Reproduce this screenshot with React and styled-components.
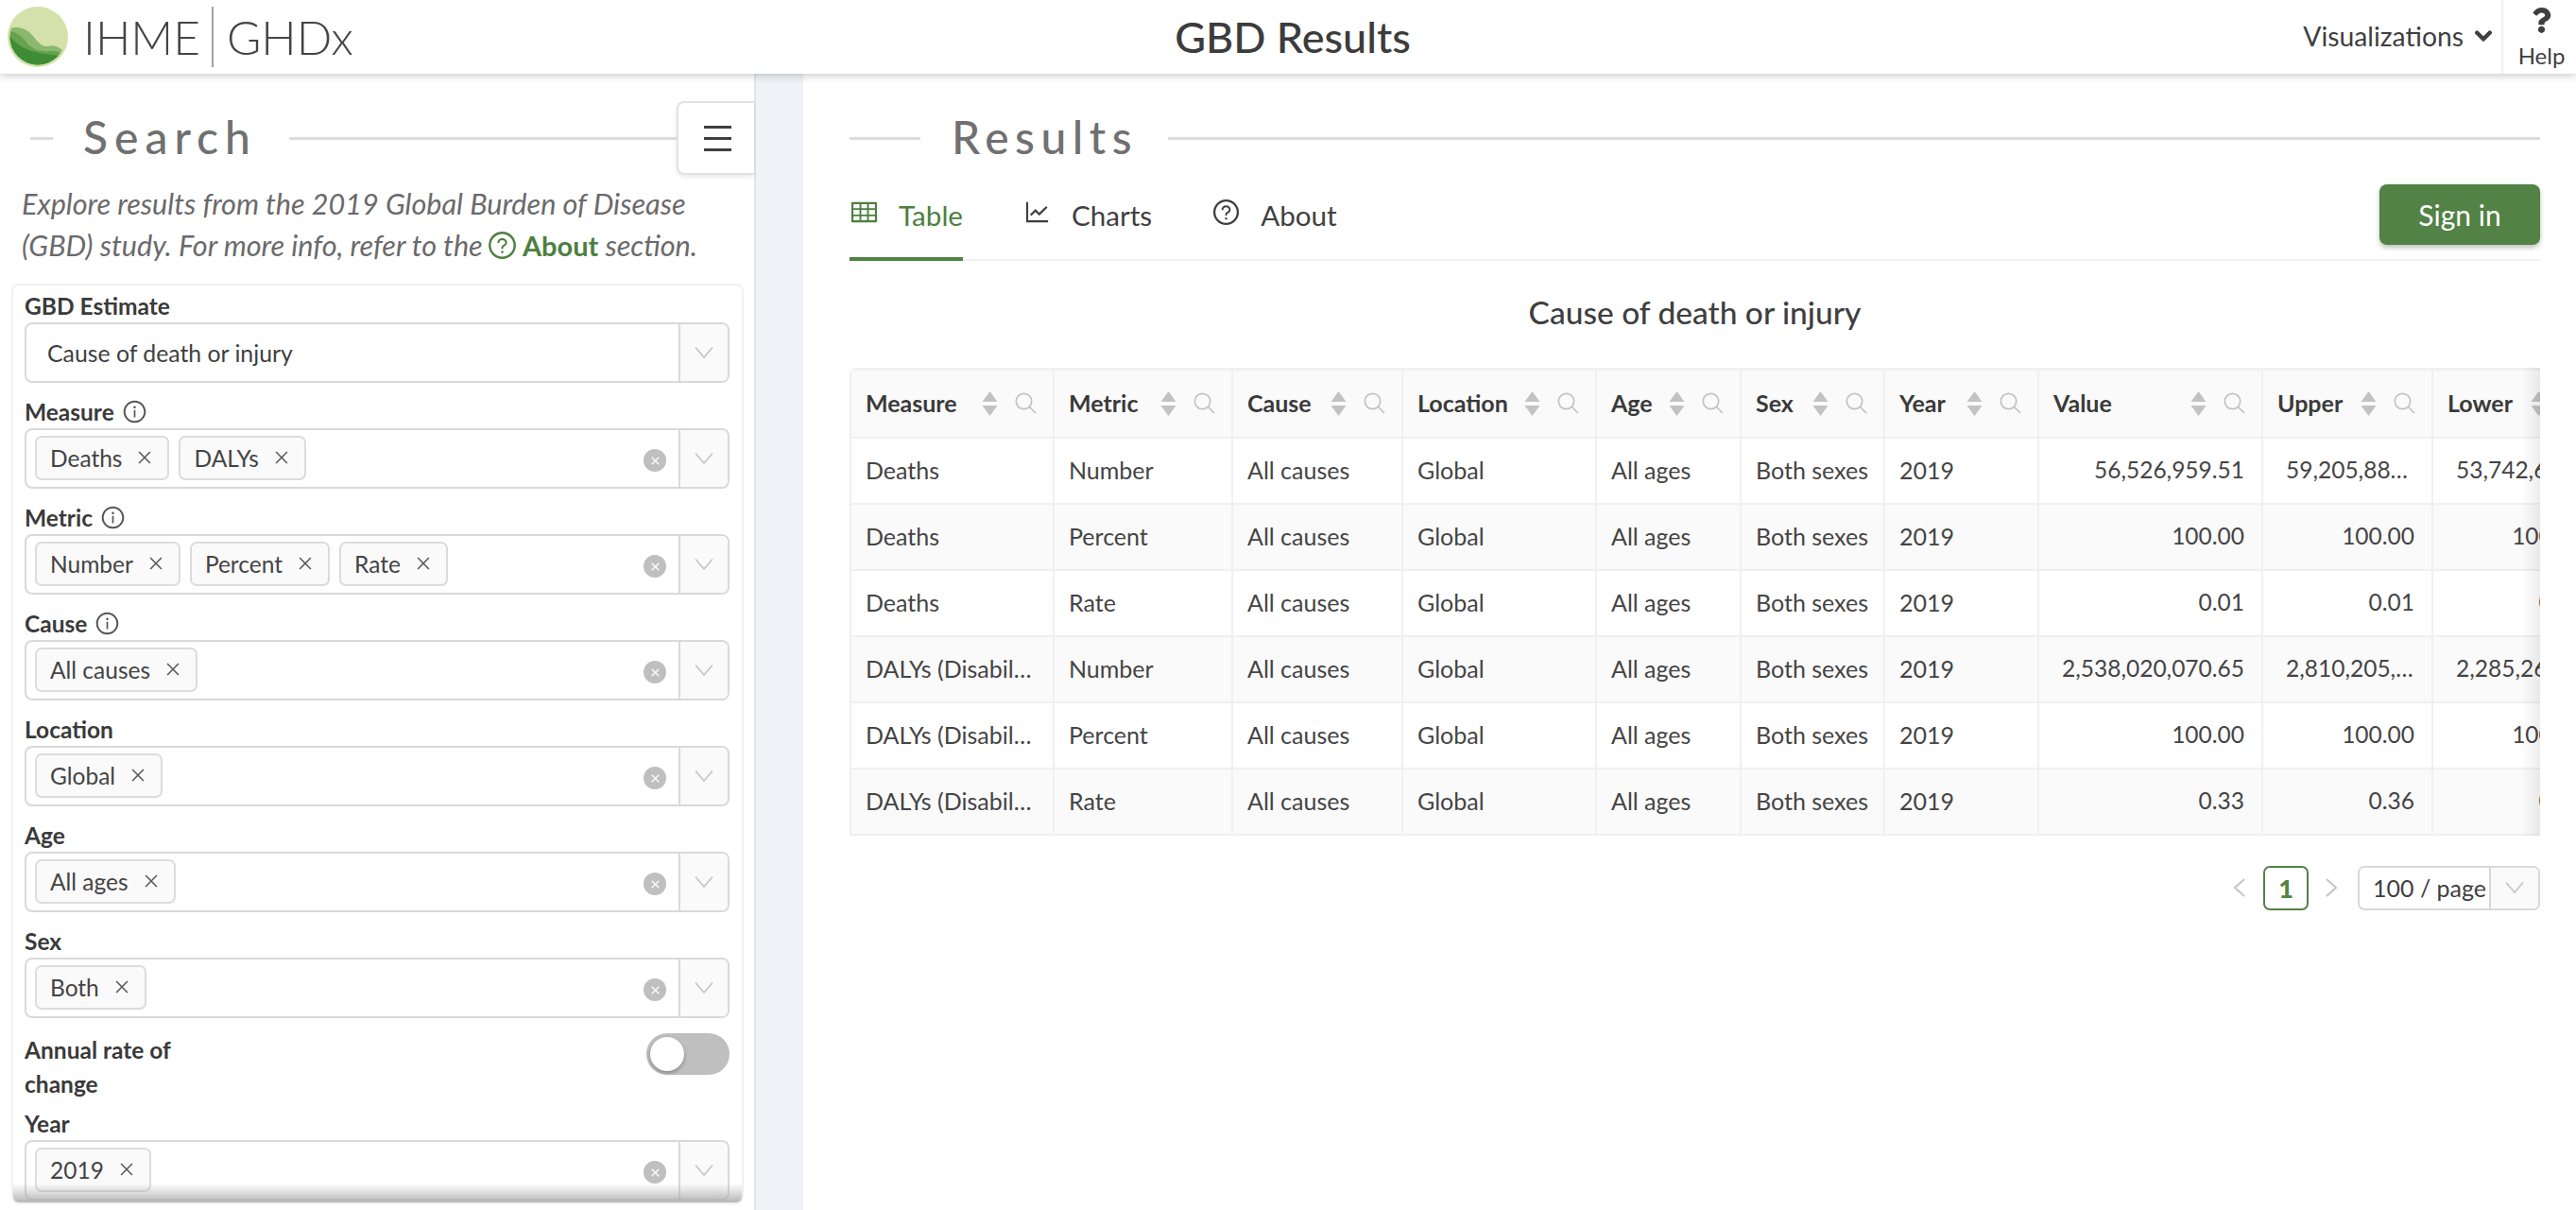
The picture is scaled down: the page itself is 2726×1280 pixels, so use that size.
import React from "react";
import styled, { createGlobalStyle } from "styled-components";
import {
  AiOutlineTable,
  AiOutlineLineChart,
  AiOutlineQuestionCircle,
  AiOutlineInfoCircle,
} from "react-icons/ai";
import { FaQuestion, FaChevronDown } from "react-icons/fa";

const GlobalStyle = createGlobalStyle`
  html, body {
    margin: 0;
    height: 100%;
    overflow: hidden;
    background: #fff;
    font-family: Lato, "Open Sans", sans-serif;
    color: #3f3f3f;
  }
  * { box-sizing: border-box; }
`;

const Page = styled.div`
  width: 2726px;
  height: 1280px;
  display: flex;
  flex-direction: column;
  overflow: hidden;
`;

const Header = styled.header`
  height: 78px;
  flex: none;
  display: grid;
  grid-template-columns: 1fr auto 1fr;
  align-items: center;
  background: #fff;
  box-shadow: 0 2px 8px rgba(0, 0, 0, 0.22);
  position: relative;
  z-index: 2;
`;

const LogoWrap = styled.div`
  display: flex;
  align-items: center;
  padding-left: 8px;
  color: #454545;
  font-weight: 300;
  font-size: 49.5px;
  letter-spacing: 0;
`;

const LogoMark = styled.svg`
  width: 64px;
  height: 64px;
  margin-right: 16px;
  flex: none;
`;

const LogoDivider = styled.span`
  width: 2px;
  height: 64px;
  margin: 0 14px 0 12px;
  background: #a3a3a3;
`;

const PageTitle = styled.h1`
  margin: 0;
  padding-left: 10px;
  font-size: 45px;
  font-weight: 500;
  color: #3c3c3c;
`;

const HeaderRight = styled.div`
  display: flex;
  justify-content: flex-end;
  align-items: stretch;
  height: 78px;
`;

const VizMenu = styled.div`
  display: flex;
  align-items: center;
  gap: 11px;
  padding: 0 9px 2px 0;
  font-size: 28.3px;
  svg { font-size: 20px; stroke: currentColor; stroke-width: 30px; }
`;

const HelpBox = styled.div`
  width: 79px;
  border-left: 2px solid #f0f0f0;
  display: flex;
  flex-direction: column;
  align-items: center;
  padding: 8px 0 0 4px;
  font-size: 24px;
  line-height: 30px;
  svg { font-size: 27px; color: #3f3f3f; margin-bottom: 9px; }
`;

const Body = styled.div`
  flex: 1;
  display: flex;
  min-height: 0;
`;

const Sidebar = styled.aside`
  width: 800px;
  flex: none;
  padding-top: 28px;
  border-right: 2px solid #e2e4ea;
`;

const Gutter = styled.div`
  width: 50px;
  flex: none;
  background: #f0f2f7;
`;

const Main = styled.main`
  flex: 1;
  min-width: 0;
  padding: 28px 38px 0 49px;
`;

const TitleRow = styled.div`
  height: 78px;
  display: flex;
  align-items: center;
  padding-left: ${(p) => p.$inset || 0}px;
`;

const Rule = styled.span`
  height: 3px;
  margin-top: 3px;
  background: #dcdcdc;
  flex: ${(p) => (p.$width ? `0 0 ${p.$width}px` : 1)};
`;

const SectionTitle = styled.h2`
  margin: 0 ${(p) => p.$gapRight}px 0 ${(p) => p.$gapLeft}px;
  font-size: 48px;
  font-weight: 500;
  letter-spacing: ${(p) => p.$track}px;
  color: #707070;
  line-height: 60px;
`;

const MenuButton = styled.button`
  width: 82px;
  height: 78px;
  flex: none;
  margin-top: 2px;
  background: #fff;
  border: 2px solid #e2e2e2;
  border-right: none;
  border-radius: 8px 0 0 8px;
  box-shadow: 0 2px 4px rgba(0, 0, 0, 0.1);
  display: flex;
  flex-direction: column;
  align-items: center;
  justify-content: center;
  gap: 9px;
  padding: 0 0 0 2px;
  span { width: 29px; height: 3px; background: #3f3f3f; }
`;

const Intro = styled.p`
  margin: 10px 0 18px;
  padding: 0 23px;
  font-size: 30.6px;
  line-height: 44px;
  font-style: italic;
  color: #6a6a6a;
  white-space: nowrap;
`;

const AboutLink = styled.span`
  color: #4c8040;
  font-style: normal;
  font-weight: 700;
  font-size: 29px;
  svg { font-size: 33px; vertical-align: -5px; margin: 0 5px 0 -3px; }
`;

const Panel = styled.div`
  position: relative;
  width: 775px;
  height: 974px;
  margin-left: 12px;
  padding: 3px 13px 0 12px;
  border: 2px solid #f1f1f1;
  border-radius: 8px;
  overflow: hidden;
  &::after {
    content: "";
    position: absolute;
    left: 0;
    right: 0;
    bottom: 0;
    height: 20px;
    background: linear-gradient(rgba(170, 170, 170, 0), rgba(170, 170, 170, 0.85));
  }
`;

const Field = styled.div`
  margin-bottom: 12px;
`;

const Label = styled.label`
  display: flex;
  align-items: center;
  gap: 8px;
  height: 36px;
  font-size: 24.5px;
  font-weight: 700;
  color: #3a3a3a;
  svg { font-size: 27px; font-weight: 400; color: #555; }
`;

const SelectBox = styled.div`
  height: 64px;
  display: flex;
  background: #fff;
  border: 2px solid #d9d9d9;
  border-radius: 8px;
`;

const SelectValue = styled.div`
  flex: 1;
  min-width: 0;
  display: flex;
  align-items: center;
  gap: 10px;
  padding-left: ${(p) => (p.$plain ? 22 : 9)}px;
  font-size: 24.8px;
  color: #3f3f3f;
`;

const Chip = styled.span`
  height: 47px;
  display: inline-flex;
  align-items: center;
  gap: 17px;
  padding: 0 17px 0 14px;
  margin-top: -2px;
  background: #fafafa;
  border: 2px solid #dcdcdc;
  border-radius: 7px;
  font-size: 24.5px;
  color: #444;
`;

const ClearDot = styled.span`
  width: 24px;
  height: 24px;
  margin: 4px 13px 0 0;
  align-self: center;
  flex: none;
  border-radius: 50%;
  background: #bfbfbf;
  display: flex;
  align-items: center;
  justify-content: center;
`;

const SelectArrow = styled.span`
  width: 52px;
  flex: none;
  border-left: 2px solid #d9d9d9;
  background: #fafafa;
  border-radius: 0 6px 6px 0;
  display: flex;
  align-items: center;
  justify-content: center;
`;

const ToggleRow = styled.div`
  display: flex;
  justify-content: space-between;
  margin: 16px 0 5px;
`;

const ToggleLabel = styled.div`
  width: 200px;
  font-size: 24.5px;
  line-height: 36px;
  font-weight: 700;
  color: #3a3a3a;
`;

const Toggle = styled.span`
  width: 88px;
  height: 44px;
  border-radius: 22px;
  background: #bfbfbf;
  padding: 4px;
  span {
    display: block;
    width: 36px;
    height: 36px;
    border-radius: 50%;
    background: #fff;
    box-shadow: 0 2px 4px rgba(0, 0, 0, 0.3);
  }
`;

const TabBar = styled.div`
  height: 92px;
  display: flex;
  align-items: center;
  justify-content: space-between;
  border-bottom: 2px solid #f0f0f0;
`;

const Tabs = styled.div`
  display: flex;
  gap: 63px;
  height: 100%;
`;

const Tab = styled.div`
  height: 92px;
  display: flex;
  align-items: center;
  gap: 21px;
  padding-bottom: 2px;
  font-size: 29.6px;
  color: ${(p) => (p.$active ? "#4c8040" : "#3f3f3f")};
  border-bottom: 4px solid ${(p) => (p.$active ? "#528245" : "transparent")};
  svg { font-size: 31px; margin-top: -6px; }
`;

const SignIn = styled.button`
  width: 170px;
  height: 64px;
  margin-top: -4px;
  border: none;
  border-radius: 8px;
  background: #528245;
  color: #fff;
  font-family: inherit;
  font-size: 30px;
  box-shadow: 0 3px 5px rgba(0, 0, 0, 0.25);
`;

const TableTitle = styled.h3`
  margin: 34px 0 39px;
  text-align: center;
  font-size: 33.5px;
  line-height: 40px;
  font-weight: 500;
  color: #3f3f3f;
`;

const TableClip = styled.div`
  position: relative;
  overflow: hidden;
  border-radius: 8px 0 0 0;
  &::after {
    content: "";
    position: absolute;
    top: 0;
    right: 0;
    bottom: 0;
    width: 20px;
    background: linear-gradient(90deg, rgba(0, 0, 0, 0), rgba(0, 0, 0, 0.07));
  }
`;

const Grid = styled.table`
  width: 1854px;
  table-layout: fixed;
  border-collapse: collapse;
  font-size: 25px;
`;

const Col = styled.col`
  width: ${(p) => p.$w}px;
`;

const Th = styled.th`
  height: 72px;
  padding: 0 17px 2px 15px;
  background: #fafafa;
  border: 2px solid #f0f0f0;
  border-top-width: 3px;
  text-align: left;
  font-weight: 700;
  color: #3a3a3a;
`;

const ThInner = styled.div`
  display: flex;
  align-items: center;
  justify-content: space-between;
`;

const ThTools = styled.div`
  display: flex;
  align-items: center;
  gap: 18px;
  margin-top: 2px;
`;

const Td = styled.td`
  height: 70px;
  padding: 0 ${(p) => (p.$tight ? 2 : 18)}px 2px ${(p) => (p.$num ? 24 : 15)}px;
  border: 2px solid #f0f0f0;
  text-align: ${(p) => (p.$num ? "right" : "left")};
  font-size: ${(p) => (p.$num ? 24.5 : 25)}px;
  color: #444;
  white-space: nowrap;
  overflow: hidden;
  text-overflow: ellipsis;
`;

const Tr = styled.tr`
  background: ${(p) => (p.$odd ? "#fafafa" : "#fff")};
`;

const Pager = styled.div`
  display: flex;
  justify-content: flex-end;
  align-items: center;
  margin-top: 32px;
  height: 47px;
`;

const PagerArrow = styled.span`
  display: flex;
  margin: ${(p) => p.$margin};
`;

const PageNumber = styled.span`
  width: 48px;
  height: 47px;
  border: 2px solid #528245;
  border-radius: 7px;
  display: flex;
  align-items: center;
  justify-content: center;
  font-size: 27px;
  font-weight: 900;
  color: #528245;
`;

const SizeSelect = styled.div`
  width: 193px;
  height: 47px;
  display: flex;
  border: 2px solid #d9d9d9;
  border-radius: 7px;
  font-size: 25px;
`;

const SizeValue = styled.span`
  flex: 1;
  display: flex;
  align-items: center;
  padding-left: 14px;
`;

const SizeArrow = styled.span`
  width: 52px;
  border-left: 2px solid #d9d9d9;
  background: #fafafa;
  border-radius: 0 5px 5px 0;
  display: flex;
  align-items: center;
  justify-content: center;
`;

const Logo = () => (
  <LogoMark viewBox="0 0 64 64">
    <defs>
      <clipPath id="logoClip">
        <circle cx="32" cy="32" r="29.5" />
      </clipPath>
    </defs>
    <circle cx="32" cy="32" r="32" fill="#d4e1aa" />
    <g clipPath="url(#logoClip)">
      <path d="M0 24 C8 20 19 22 26 30 C32 37 36 43 43 42 C49 40 54 42 60 48 L60 64 L0 64Z" fill="#8ab86f" />
      <path d="M0 26 C8 26 14 30 20 38 C26 45 34 48 44 47 C50 47 54 47 58 50 L58 64 L0 64Z" fill="#66a24f" />
      <path d="M0 29 C6 36 14 44 26 47 C36 50 46 51 56 52 L56 64 L0 64Z" fill="#3f8c36" />
    </g>
  </LogoMark>
);

const Vee = ({ w = 20, h = 12 }) => (
  <svg width={w} height={h} viewBox="0 0 20 12" fill="none" stroke="#c4c4c4" strokeWidth="1.6">
    <path d="M1 0.5 L10 11 L19 0.5" />
  </svg>
);

const Cross = ({ color = "#555", size = 14, width = 1.4 }) => (
  <svg width={size} height={size} viewBox="0 0 13 13" stroke={color} strokeWidth={width}>
    <path d="M1 1 L12 12 M12 1 L1 12" />
  </svg>
);

const Chevron = ({ d }) => (
  <svg width="14" height="22" viewBox="0 0 14 22" fill="none" stroke="#c4c4c4" strokeWidth="2">
    <path d={d} />
  </svg>
);

const SortIcon = () => (
  <svg width="17" height="26" viewBox="0 0 17 26" fill="#c2c2c2">
    <path d="M8.5 0 L16.5 11 L0.5 11Z" />
    <path d="M0.5 15 L16.5 15 L8.5 26Z" />
  </svg>
);

const SearchIcon = () => (
  <svg width="23" height="23" viewBox="0 0 23 23" fill="none" stroke="#c2c2c2" strokeWidth="1.7">
    <circle cx="9.5" cy="9.5" r="8.2" />
    <path d="M15.5 15.5 L22 22" />
  </svg>
);

const Select = ({ items }) => (
  <SelectBox>
    <SelectValue>
      {items.map((item) => (
        <Chip key={item}>
          {item}
          <Cross />
        </Chip>
      ))}
    </SelectValue>
    <ClearDot>
      <Cross color="#fff" size={9} width={1.8} />
    </ClearDot>
    <SelectArrow>
      <Vee />
    </SelectArrow>
  </SelectBox>
);

const fields = [
  { label: "Measure", info: true, items: ["Deaths", "DALYs"] },
  { label: "Metric", info: true, items: ["Number", "Percent", "Rate"] },
  { label: "Cause", info: true, items: ["All causes"] },
  { label: "Location", items: ["Global"] },
  { label: "Age", items: ["All ages"] },
  { label: "Sex", items: ["Both"] },
];

const columns = [
  { name: "Measure", w: 215 },
  { name: "Metric", w: 189 },
  { name: "Cause", w: 180 },
  { name: "Location", w: 205 },
  { name: "Age", w: 153 },
  { name: "Sex", w: 152 },
  { name: "Year", w: 163 },
  { name: "Value", w: 237 },
  { name: "Upper", w: 180 },
  { name: "Lower", w: 180 },
];

const dalys = "DALYs (Disability-Adjusted Life Years)";
const rows = [
  ["Deaths", "Number", "56,526,959.51", "59,205,883.40", "53,742,616.22"],
  ["Deaths", "Percent", "100.00", "100.00", "100.00"],
  ["Deaths", "Rate", "0.01", "0.01", "0.01"],
  [dalys, "Number", "2,538,020,070.65", "2,810,205,112.20", "2,285,264,018.10"],
  [dalys, "Percent", "100.00", "100.00", "100.00"],
  [dalys, "Rate", "0.33", "0.36", "0.30"],
];

const App = () => (
  <Page>
    <GlobalStyle />
    <Header>
      <LogoWrap>
        <Logo />
        IHME
        <LogoDivider />
        GHDx
      </LogoWrap>
      <PageTitle>GBD Results</PageTitle>
      <HeaderRight>
        <VizMenu>
          Visualizations <FaChevronDown />
        </VizMenu>
        <HelpBox>
          <FaQuestion />
          Help
        </HelpBox>
      </HeaderRight>
    </Header>
    <Body>
      <Sidebar>
        <TitleRow $inset={32}>
          <Rule $width={24} />
          <SectionTitle $gapLeft={32} $gapRight={34} $track={7}>Search</SectionTitle>
          <Rule />
          <MenuButton>
            <span />
            <span />
            <span />
          </MenuButton>
        </TitleRow>
        <Intro>
          Explore results from the 2019 Global Burden of Disease
          <br />
          (GBD) study. For more info, refer to the{" "}
          <AboutLink>
            <AiOutlineQuestionCircle />
            About
          </AboutLink>{" "}
          section.
        </Intro>
        <Panel>
          <Field>
            <Label>GBD Estimate</Label>
            <SelectBox>
              <SelectValue $plain>Cause of death or injury</SelectValue>
              <SelectArrow>
                <Vee />
              </SelectArrow>
            </SelectBox>
          </Field>
          {fields.map((field) => (
            <Field key={field.label}>
              <Label>
                {field.label}
                {field.info && <AiOutlineInfoCircle />}
              </Label>
              <Select items={field.items} />
            </Field>
          ))}
          <ToggleRow>
            <ToggleLabel>Annual rate of change</ToggleLabel>
            <Toggle>
              <span />
            </Toggle>
          </ToggleRow>
          <Field>
            <Label>Year</Label>
            <Select items={["2019"]} />
          </Field>
        </Panel>
      </Sidebar>
      <Gutter />
      <Main>
        <TitleRow>
          <Rule $width={75} />
          <SectionTitle $gapLeft={33} $gapRight={32} $track={6.5}>Results</SectionTitle>
          <Rule />
        </TitleRow>
        <TabBar>
          <Tabs>
            <Tab $active>
              <AiOutlineTable />
              Table
            </Tab>
            <Tab>
              <AiOutlineLineChart />
              Charts
            </Tab>
            <Tab>
              <AiOutlineQuestionCircle />
              About
            </Tab>
          </Tabs>
          <SignIn>Sign in</SignIn>
        </TabBar>
        <TableTitle>Cause of death or injury</TableTitle>
        <TableClip>
          <Grid>
            <colgroup>
              {columns.map((col) => (
                <Col key={col.name} $w={col.w} />
              ))}
            </colgroup>
            <thead>
              <tr>
                {columns.map((col) => (
                  <Th key={col.name}>
                    <ThInner>
                      {col.name}
                      <ThTools>
                        <SortIcon />
                        <SearchIcon />
                      </ThTools>
                    </ThInner>
                  </Th>
                ))}
              </tr>
            </thead>
            <tbody>
              {rows.map((row, i) => (
                <Tr key={i} $odd={i % 2 === 1}>
                  <Td>{row[0]}</Td>
                  <Td>{row[1]}</Td>
                  <Td>All causes</Td>
                  <Td>Global</Td>
                  <Td>All ages</Td>
                  <Td $tight>Both sexes</Td>
                  <Td>2019</Td>
                  <Td $num>{row[2]}</Td>
                  <Td $num>{row[3]}</Td>
                  <Td $num>{row[4]}</Td>
                </Tr>
              ))}
            </tbody>
          </Grid>
        </TableClip>
        <Pager>
          <PagerArrow $margin="0 18px 0 0">
            <Chevron d="M12 2 L2 11 L12 20" />
          </PagerArrow>
          <PageNumber>1</PageNumber>
          <PagerArrow $margin="0 21px 0 17px">
            <Chevron d="M2 2 L12 11 L2 20" />
          </PagerArrow>
          <SizeSelect>
            <SizeValue>100 / page</SizeValue>
            <SizeArrow>
              <Vee />
            </SizeArrow>
          </SizeSelect>
        </Pager>
      </Main>
    </Body>
  </Page>
);

export default App;
